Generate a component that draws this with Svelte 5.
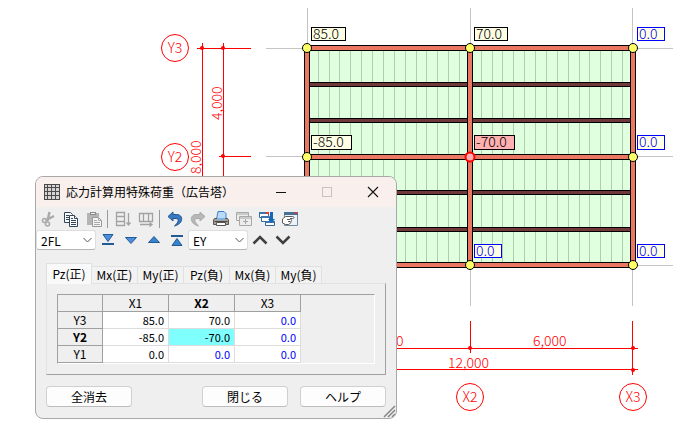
<script>
  const floors = ["1FL", "2FL", "RFL"];
  const directions = ["EX", "EY"];
  const tabs = ["Pz(正)", "Mx(正)", "My(正)", "Pz(負)", "Mx(負)", "My(負)"];
  const columns = ["X1", "X2", "X3"];
  const rows = [
    { name: "Y3", values: ["85.0", "70.0", "0.0"] },
    { name: "Y2", values: ["-85.0", "-70.0", "0.0"] },
    { name: "Y1", values: ["0.0", "0.0", "0.0"] },
  ];

  let floor = $state("2FL");
  let direction = $state("EY");
  let activeTab = $state(0);
  let selected = $state({ row: 1, col: 1 });

  // An untouched zero is shown in blue
  function isUnset(row, col) {
    return rows[row].values[col] === "0.0" && !(row === 2 && col === 0);
  }

  // Plan geometry
  const gridX = [307, 470, 633];
  const gridY = [48, 157, 265];
  const joists = [82, 118, 190, 227];
  const decking = gridX.slice(0, 2).flatMap((x) =>
    Array.from({ length: 14 }, (_, i) => Math.floor(x + 0.4 + (i + 1) * 10.86)),
  );
  const labels = [
    { x: 311, y: 27, w: 35, text: "85.0", kind: "set" },
    { x: 474, y: 27, w: 34, text: "70.0", kind: "set" },
    { x: 637, y: 27, w: 28, text: "0.0", kind: "unset" },
    { x: 311, y: 135, w: 41, text: "-85.0", kind: "set" },
    { x: 474, y: 135, w: 41, text: "-70.0", kind: "current" },
    { x: 637, y: 135, w: 28, text: "0.0", kind: "unset" },
    { x: 474, y: 244, w: 28, text: "0.0", kind: "unset" },
    { x: 637, y: 244, w: 28, text: "0.0", kind: "unset" },
  ];
  const axes = [
    { x: 175, y: 48, name: "Y3" },
    { x: 175, y: 157, name: "Y2" },
    { x: 470, y: 397, name: "X2" },
    { x: 633, y: 397, name: "X3" },
  ];
  const dots = [[202, 48], [223, 48], [223, 156], [470, 348], [633, 348], [633, 370]];
</script>

<main class="workspace">
  <svg class="plan" viewBox="0 0 698 438" role="img" aria-label="伏図">
    <path class="guide" d="M307.5 8V45M470.5 8V45M632.5 8V45M307.5 268V306M470.5 268V306M632.5 268V306
      M266 48.5H303M266 156.5H303M266 265.5H303M637 48.5H673M637 156.5H673M637 265.5H673" />

    <rect class="slab" x="307" y="48" width="326" height="217" />
    {#each decking as x}
      <path class="deck-line" d="M{x + 0.5} 51V262" />
    {/each}
    {#each joists as y}
      <rect class="joist" x="307.5" y={y + 0.5} width="325" height="4" />
    {/each}
    {#each gridY as y}
      <rect class="beam" x="307.5" y={y - 2.5} width="325" height="5" />
    {/each}
    {#each gridX as x}
      <rect class="beam" x={x - 2.5} y="47.5" width="5" height="218" />
    {/each}
    {#each gridY as y, r}
      {#each gridX as x, c}
        <circle class="node" class:current={r === selected.row && c === selected.col} cx={x} cy={y} r="4.5" />
      {/each}
    {/each}

    {#each labels as label}
      <g class="label {label.kind}">
        <rect x={label.x + 0.5} y={label.y + 0.5} width={label.w - 1} height={label.y === 135 ? 14 : 13} />
        <text x={label.x + 2} y={label.y + 12}>{label.text}</text>
      </g>
    {/each}

    <g class="dims">
      <path d="M202.5 43V348M223.5 43V348M197 48.5H251M219 156.5H251" />
      <path d="M302 348.5H638M302 369.5H638M470.5 321V353M632.5 321V375" />
      {#each dots as [x, y]}
        <circle class="dot" cx={x} cy={y} r="2" />
      {/each}
      {#each axes as axis}
        <circle cx={axis.x} cy={axis.y} r="13.5" />
        <text x={axis.x} y={axis.y + 5} text-anchor="middle">{axis.name}</text>
      {/each}
      <text transform="translate(222 120) rotate(-90)">4,000</text>
      <text transform="translate(201 174) rotate(-90)">8,000</text>
      <text x="370" y="346">6,000</text>
      <text x="533" y="346">6,000</text>
      <text x="448" y="368">12,000</text>
    </g>
  </svg>

  <section class="dialog" role="dialog" aria-labelledby="dialog-title">
    <header class="titlebar">
      <svg class="app-icon" width="16" height="16" viewBox="0 0 16 16">
        <path d="M0 0h16v16H0z" fill="#4a4a4a" />
        <path d="M1 1h2v2H1zM4 1h3v2H4zM8 1h3v2H8zM12 1h3v2h-3zM1 4h2v3H1zM4 4h3v3H4zM8 4h3v3H8zM12 4h3v3h-3zM1 8h2v3H1zM4 8h3v3H4zM8 8h3v3H8zM12 8h3v3h-3zM1 12h2v3H1zM4 12h3v3H4zM8 12h3v3H8zM12 12h3v3h-3z" fill="#d8d4d3" />
      </svg>
      <h1 id="dialog-title">応力計算用特殊荷重（広告塔）</h1>
      <button class="caption" aria-label="最小化">
        <svg width="12" height="12"><path d="M1 6.5h10" stroke="#111" /></svg>
      </button>
      <button class="caption" aria-label="最大化" disabled>
        <svg width="12" height="12"><rect x="1.5" y="1.5" width="9" height="9" fill="none" stroke="#c8c2c1" /></svg>
      </button>
      <button class="caption" aria-label="閉じる">
        <svg width="12" height="12"><path d="M1 1l10 10M11 1L1 11" stroke="#111" stroke-width="1.1" /></svg>
      </button>
    </header>

    <div class="toolbar">
      <button class="tool" aria-label="切り取り" disabled>
        <svg width="16" height="16" viewBox="0 0 16 16" fill="none" stroke="#ababab">
          <path d="M9.500 1L7.500 10M14 5L5.500 9.500" stroke-width="2.500" />
          <circle cx="4.500" cy="9.500" r="2" stroke-width="1.600" />
          <circle cx="7.500" cy="13" r="2" stroke-width="1.600" />
        </svg>
      </button>
      <button class="tool" aria-label="コピー">
        <svg width="16" height="16" viewBox="0 0 16 16" fill="#f7f9fb" stroke="#34475a">
          <path d="M1.500 1.500h6l2 2v8h-8z" />
          <path d="M3 4.500h3M3 6.500h3M3 8.500h3" />
          <path d="M6.500 4.500h5l3 3v8h-8z" />
          <path d="M11.500 4.500v3h3M8 7.500h2M8 9.500h5M8 11.500h5M8 13.500h5" />
        </svg>
      </button>
      <button class="tool" aria-label="貼り付け" disabled>
        <svg width="16" height="16" viewBox="0 0 16 16">
          <path d="M1 2h12v12H1z" fill="#b4b4b4" />
          <path d="M4 1h6v3H4z" fill="#8c8c8c" />
          <path d="M5 2h4v1H5z" fill="#eee" />
          <path d="M6.500 6.500h6l3 3v6h-9z" fill="#f4f4f4" stroke="#999" />
          <path d="M8 9.500h3M8 11.500h6M8 13.500h6M12.500 6.500v3h3" stroke="#aaa" fill="none" />
        </svg>
      </button>
      <span class="divider"></span>
      <button class="tool" aria-label="行コピー" disabled>
        <svg width="16" height="16" viewBox="0 0 16 16" fill="none" stroke="#a2a2a2">
          <path d="M1.500 1.500h8v13h-8zM1 5.500h9M1 10.500h9" stroke-width="1.300" />
          <path d="M13.500 2v12M11.500 11.500l2 2.500 2-2.500" stroke-width="1.300" />
        </svg>
      </button>
      <button class="tool" aria-label="列コピー" disabled>
        <svg width="16" height="16" viewBox="0 0 16 16" fill="none" stroke="#a2a2a2">
          <path d="M1.500 2.500h13v8h-13zM5.500 2v9M10.500 2v9" stroke-width="1.300" />
          <path d="M2 13.500h12M11.500 11.500l2.500 2-2.500 2" stroke-width="1.300" />
        </svg>
      </button>
      <span class="divider"></span>
      <button class="tool" aria-label="元に戻す">
        <svg width="16" height="16" viewBox="0 0 16 16">
          <path d="M1 5.500L6 1v2.500h3.500c7 0 7.500 9-2 11.500 4-3.500 5-7.500 1.500-7.500H6V10z" fill="#3a78bf" stroke="#1f5596" />
        </svg>
      </button>
      <button class="tool" aria-label="やり直し" disabled>
        <svg width="16" height="16" viewBox="0 0 16 16">
          <path d="M15 5.500L10 1v2.500H6.500c-7 0-7.500 9 2 11.500-4-3.500-5-7.500-1.500-7.500h3V10z" fill="#b8b8b8" stroke="#a8a8a8" />
        </svg>
      </button>
      <button class="tool" aria-label="印刷">
        <svg width="16" height="16" viewBox="0 0 16 16">
          <path d="M3.500 8l1.500-7.500h6l2 2V8z" fill="#b9daf9" stroke="#3e7fc9" />
          <path d="M1.500 7.500h13l1 1.500v4.500H.5V9z" fill="#a5a19a" stroke="#5a5753" />
          <path d="M4 7h8v2H4z" fill="#7fb0e6" />
          <path d="M3.500 11.500h9v3h-9z" fill="#fff" stroke="#5a5753" />
          <path d="M1.500 10.500h13" stroke="#4c4945" />
        </svg>
      </button>
      <button class="tool" aria-label="ウィンドウ追加" disabled>
        <svg width="16" height="16" viewBox="0 0 16 16" fill="#ededed" stroke="#a8a8a8">
          <path d="M.5 1.500h12v8H.5zM.5 3h12" />
          <path d="M3.500 5.500h12v9h-12zM3.500 7h12M9.500 8v5M7 10.500h5" />
        </svg>
      </button>
      <button class="tool" aria-label="ウィンドウ整列">
        <svg width="16" height="16" viewBox="0 0 16 16">
          <path d="M.5 1.500h9v5h-9zM2.500 5.500h8v5h-8zM6.500 10.500h9v4h-9z" fill="#fff" stroke="#356797" />
          <path d="M0 1h10v2H0zM2 5h8v2H2zM6 10h10v2H6z" fill="#3c74ad" />
          <path d="M7 1h3v2H7z" fill="#e33" />
          <path d="M11 1h3v7h2l-3.500 4L9 8h2z" fill="#1666b5" />
        </svg>
      </button>
      <button class="tool" aria-label="プロパティ">
        <svg width="16" height="16" viewBox="0 0 16 16">
          <path d="M2.500 2.500h13v12h-13z" fill="#edf2f7" stroke="#6f8ba7" />
          <path d="M2 1h14v3H2z" fill="#496f96" />
          <path d="M13 1h2v2h-2z" fill="#e33" />
          <path d="M.5 8l3-2.500h7c2 0 2 2 0 2H8c2 1 2 2 1 2.500 0 1 0 2-1 2 0 1-1 1.500-2 1.500H3.500L.5 12z" fill="#fff" stroke="#5a5a5a" />
          <path d="M5 8.500h3M6 10.500h2.500" stroke="#5a5a5a" />
        </svg>
      </button>
    </div>

    <div class="toolbar selectors">
      <span class="combo">
        <select bind:value={floor} aria-label="階">
          {#each floors as name}<option>{name}</option>{/each}
        </select>
        <svg class="arrow" width="9" height="6"><path d="M.5 1l4 4 4-4" fill="none" stroke="#555" /></svg>
      </span>
      <button class="tool" aria-label="最下階">
        <svg width="14" height="14"><path d="M2 1.500h10L7 8.500z" fill="#4d8fdc" stroke="#235a94" /><path d="M1 10h12v2H1z" fill="#235a94" /></svg>
      </button>
      <button class="tool" aria-label="下の階">
        <svg width="14" height="14"><path d="M1.500 4.500h11L7 10.500z" fill="#4d8fdc" stroke="#235a94" /></svg>
      </button>
      <button class="tool" aria-label="上の階">
        <svg width="14" height="14"><path d="M1.500 9.500h11L7 3.500z" fill="#3684cd" stroke="#235a94" /></svg>
      </button>
      <button class="tool" aria-label="最上階">
        <svg width="14" height="14"><path d="M1 2h12v2H1z" fill="#235a94" /><path d="M2 12.500h10L7 5.500z" fill="#3684cd" stroke="#235a94" /></svg>
      </button>
      <span class="combo">
        <select bind:value={direction} aria-label="荷重ケース">
          {#each directions as name}<option>{name}</option>{/each}
        </select>
        <svg class="arrow" width="9" height="6"><path d="M.5 1l4 4 4-4" fill="none" stroke="#555" /></svg>
      </span>
      <button class="tool" aria-label="前のケース">
        <svg width="16" height="10"><path d="M1.500 8.500L8 2l6.500 6.500" fill="none" stroke="#404040" stroke-width="2.500" /></svg>
      </button>
      <button class="tool" aria-label="次のケース">
        <svg width="16" height="10"><path d="M1.500 1.500L8 8l6.500-6.500" fill="none" stroke="#404040" stroke-width="2.500" /></svg>
      </button>
    </div>

    <div class="body">
      <div class="tabs" role="tablist">
        {#each tabs as tab, i}
          <button class="tab" class:active={i === activeTab} role="tab" aria-selected={i === activeTab} onclick={() => (activeTab = i)}>{tab}</button>
        {/each}
      </div>

      <div class="panel" role="tabpanel">
        <div class="sheet">
          <table>
            <thead>
              <tr>
                <th class="corner"></th>
                {#each columns as column, c}
                  <th scope="col" class:strong={c === selected.col}>{column}</th>
                {/each}
              </tr>
            </thead>
            <tbody>
              {#each rows as row, r}
                <tr>
                  <th scope="row" class:strong={r === selected.row}>{row.name}</th>
                  {#each row.values as value, c}
                    <td
                      class:unset={isUnset(r, c)}
                      class:selected={r === selected.row && c === selected.col}
                      onclick={() => (selected = { row: r, col: c })}>{value}</td>
                  {/each}
                </tr>
              {/each}
            </tbody>
          </table>
        </div>
      </div>

      <footer class="actions">
        <button class="action clear">全消去</button>
        <button class="action">閉じる</button>
        <button class="action">ヘルプ</button>
      </footer>
    </div>

    <svg class="grip" width="14" height="14">
      <path d="M2 13L13 2M6 13l7-7M10 13l3-3" stroke="#858585" stroke-width="1.500" />
    </svg>
  </section>
</main>

<style>
  :global(body) {
    background: #fff;
  }
  .workspace {
    position: relative;
    font-family: "Noto Sans CJK JP", sans-serif;
    font-size: 12px;
    color: #000;
  }
  button, select {
    font: inherit;
    color: inherit;
  }

  /* Plan */
  .plan {
    display: block;
    width: 100%;
    font-size: 14px;
    font-weight: 300;
  }
  .guide { stroke: #c4c4c4; }
  .slab { fill: #dfffdf; }
  .deck-line { stroke: #b0cdb0; }
  .joist { fill: #703838; stroke: #000; }
  .beam { fill: #e97762; stroke: #000; }
  .node { fill: #ffff66; stroke: #000; }
  .node.current { fill: #ffb0b0; stroke: #f00; stroke-width: 2px; }
  .label rect { fill: #ffffe6; stroke: #000; }
  .label.current rect { fill: #ffb0b0; }
  .label.unset rect { stroke: #00f; }
  .label.unset text { fill: #00f; }
  .dims path, .dims circle { fill: none; stroke: #f00; }
  .dims .dot { fill: #f00; stroke: none; }
  .dims text { fill: #f00; }

  /* Dialog */
  .dialog {
    position: absolute;
    top: 176px;
    left: 35px;
    width: 360px;
    border: 1px solid #a8a8a8;
    border-radius: 8px;
    background: #efefef;
    overflow: hidden;
  }
  .titlebar {
    display: flex;
    align-items: center;
    height: 30px;
    padding-left: 8px;
    background: #f9f0ee;
  }
  .titlebar h1 {
    flex: 1;
    margin: 0 0 0 6px;
    font-size: 12px;
    font-weight: 400;
    line-height: 16px;
    white-space: nowrap;
  }
  .caption, .tool {
    display: grid;
    place-items: center;
    flex-shrink: 0;
    height: 100%;
    padding: 0;
    border: 0;
    background: none;
  }
  .caption { width: 46px; }
  .tool { width: 23px; }
  .toolbar {
    display: flex;
    align-items: center;
    height: 23px;
  }
  .divider {
    width: 1px;
    height: 18px;
    margin: 0 3px 0 2px;
    background: #999;
  }
  .selectors { height: 20px; }
  .combo {
    display: grid;
    width: 60px;
    height: 20px;
  }
  .combo select {
    grid-area: 1 / 1;
    appearance: none;
    min-width: 0;
    padding: 0 4px;
    border: 1px solid #dedede;
    border-bottom-color: #b5b5b5;
    border-radius: 3px;
    background: #fff;
  }
  .arrow {
    grid-area: 1 / 1;
    place-self: center end;
    margin-right: 4px;
    pointer-events: none;
  }

  .body { padding: 13px 10px 11px; }
  .tabs {
    display: flex;
    align-items: flex-end;
    height: 20px;
  }
  .tab {
    width: 46px;
    height: 17px;
    padding: 0;
    border: 1px solid #e0e0e0;
    border-width: 1px 1px 0 0;
    background: #f2f2f2;
    line-height: 16px;
    white-space: nowrap;
  }
  .tab.active {
    z-index: 1;
    height: 21px;
    margin-bottom: -1px;
    border-left-width: 1px;
    background: #f9f9f9;
  }
  .panel {
    padding: 10px;
    border: 1px solid #e2e2e2;
    border-right-color: #a0a0a0;
    border-bottom-color: #a0a0a0;
  }
  .sheet {
    border: 1px solid #fff;
    border-top-color: #a0a0a0;
    border-left-color: #a0a0a0;
  }
  table {
    width: 243px;
    border-spacing: 0;
    table-layout: fixed;
  }
  th, td {
    box-sizing: border-box;
    height: 17px;
    padding: 0;
    border: 1px solid #dcdcdc;
    border-width: 0 1px 1px 0;
    line-height: 16px;
  }
  th {
    border-color: #a0a0a0;
    background: #efefef;
    font-weight: 400;
  }
  th.strong { font-weight: 700; }
  .corner { width: 45px; }
  td {
    padding-right: 4px;
    background: #fff;
    font-size: 11px;
    text-align: right;
  }
  td.unset { color: #00f; }
  td.selected { background: #80ffff; }

  .actions {
    display: flex;
    gap: 12px;
    margin-top: 11px;
  }
  .action {
    width: 86px;
    height: 21px;
    padding: 0;
    border: 1px solid #d0d0d0;
    border-bottom-color: #bcbcbc;
    border-radius: 4px;
    background: #fdfdfd;
    line-height: 18px;
  }
  .clear { margin-right: auto; }
  .grip {
    position: absolute;
    right: 0;
    bottom: 0;
  }
</style>
